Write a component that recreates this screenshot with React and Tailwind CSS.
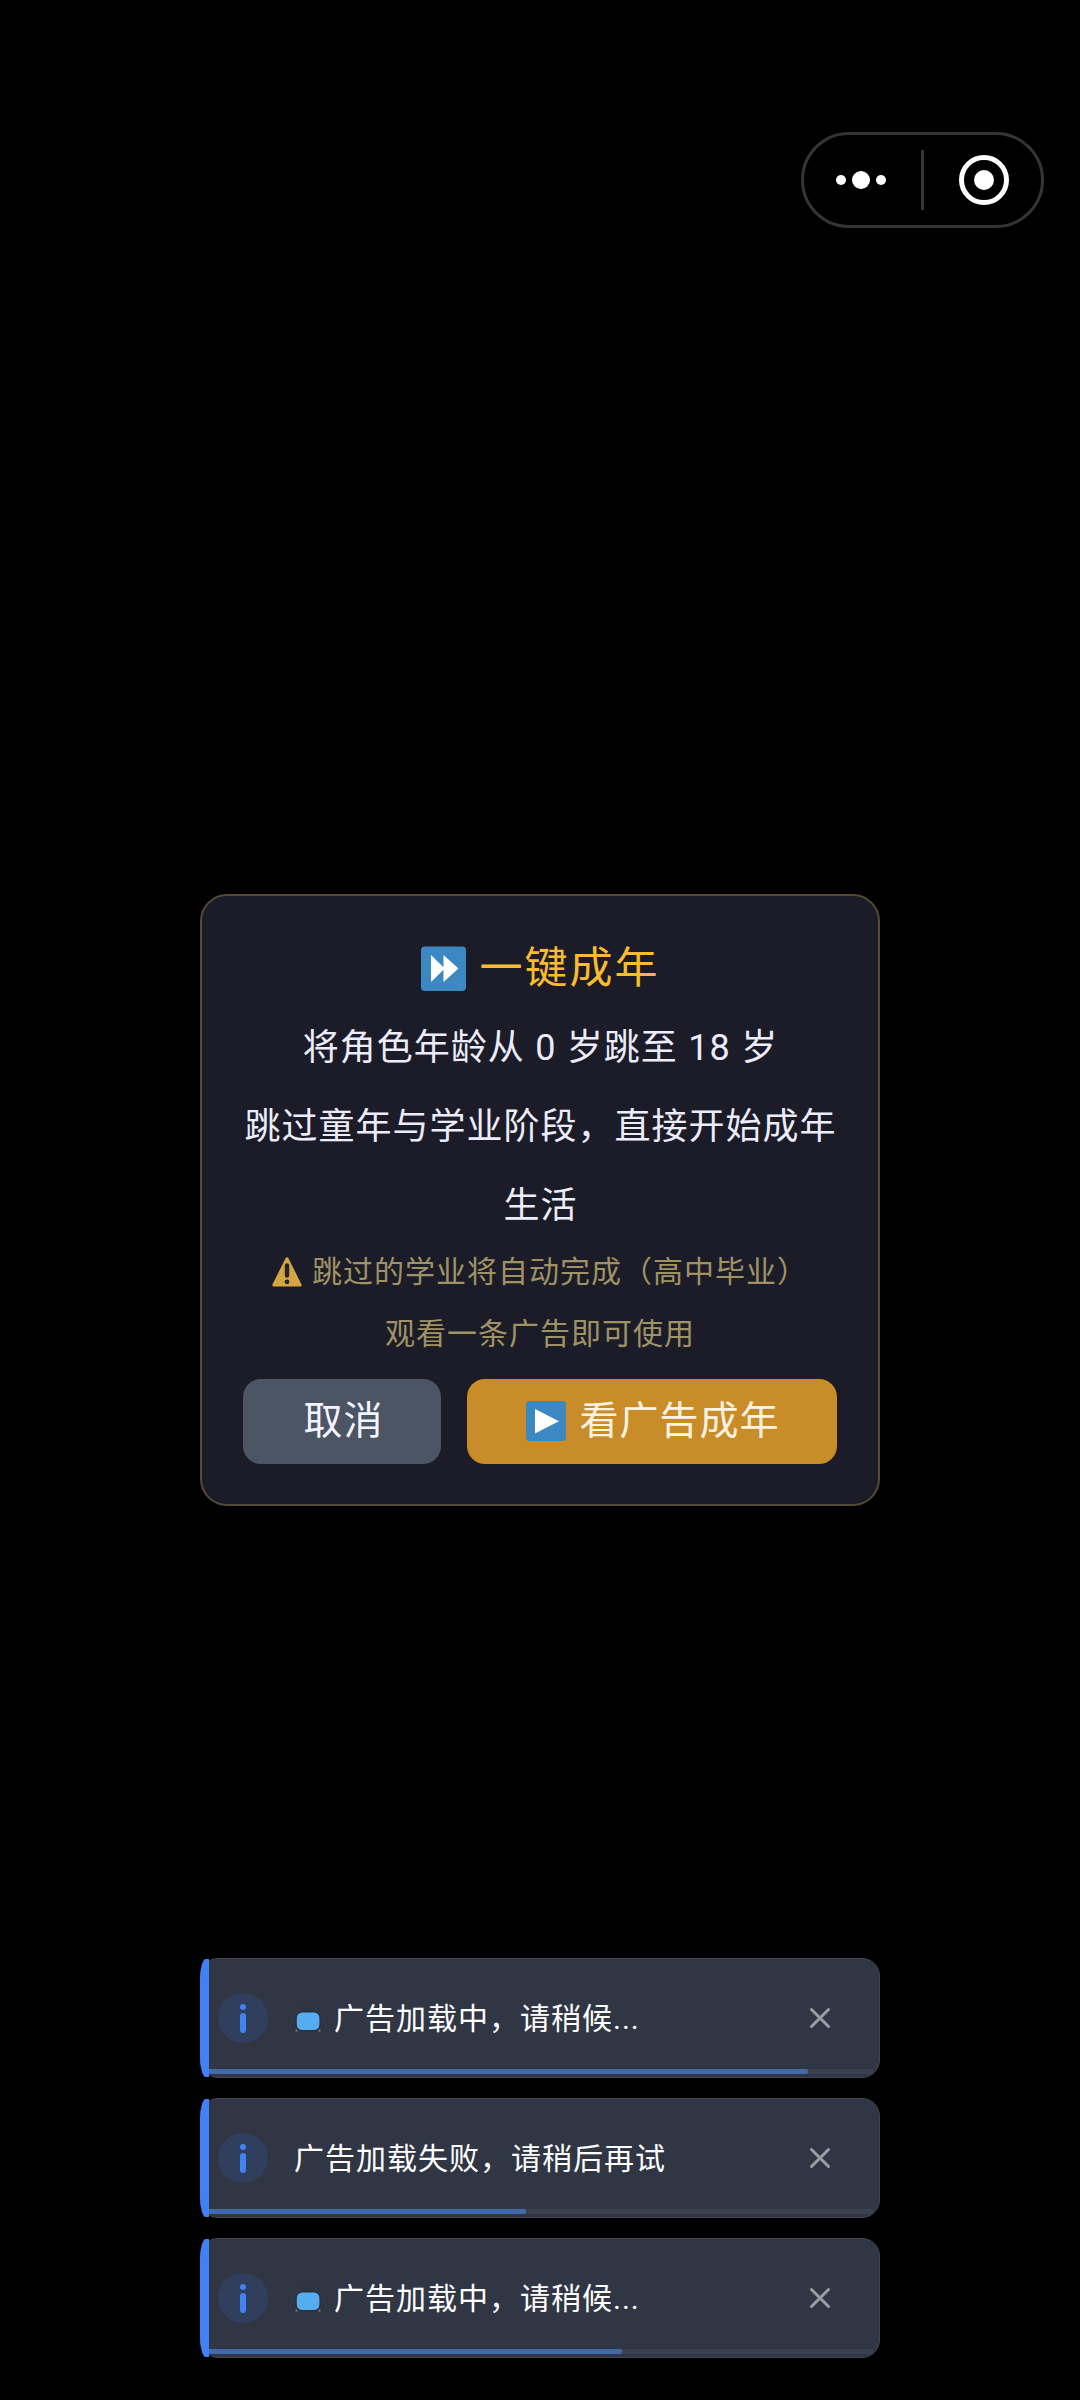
import React from 'react';

const toasts = [
  { id: 1, text: '广告加载中，请稍候...', tv: true, progress: 599 },
  { id: 2, text: '广告加载失败，请稍后再试', tv: false, progress: 317 },
  { id: 3, text: '广告加载中，请稍候...', tv: true, progress: 413 },
];

const FastForwardIcon = () => (
  <svg className="w-[45px] h-[45px] shrink-0" viewBox="0 0 45 45">
    <rect y=".5" width="45" height="44.5" rx="4" fill="#3b88c3" />
    <path d="M10 9v27l12.5-12.2V36L37.500 22.500 22.500 9v12.200z" fill="#fff" />
  </svg>
);

const PlayIcon = () => (
  <svg className="w-10 h-10 shrink-0" viewBox="0 0 40 40">
    <rect width="40" height="40" rx="3.500" fill="#3b88c3" />
    <path d="M9 8v24.500l24-12.250z" fill="#fff" />
  </svg>
);

const WarningIcon = () => (
  <svg className="w-[30px] h-[30px] shrink-0" viewBox="0 0 30 30">
    <path d="M13.600 1.200Q15-.8 16.400 1.200L29.400 27.200Q30.200 29.500 28 29.500H2Q-.2 29.500.6 27.200z" fill="#d3a543" />
    <path d="M15 8.500v10" stroke="#25222a" strokeWidth="4.400" strokeLinecap="round" />
    <circle cx="15" cy="24.800" r="2.400" fill="#25222a" />
  </svg>
);

const TvIcon = () => (
  <svg className="w-[28px] h-[30px] shrink-0" viewBox="0 0 28 30">
    <path d="M8 2l6 6 6-6" stroke="#2b303a" strokeWidth="1.200" fill="none" />
    <circle cx="2.500" cy="27.500" r="1.300" fill="#6b7079" />
    <circle cx="25.500" cy="27.500" r="1.300" fill="#6b7079" />
    <rect x="1.500" y="8" width="25" height="20.500" rx="6.500" fill="#2c303b" />
    <rect x="2.800" y="9.500" width="22.600" height="17.600" rx="5.500" fill="#55acee" />
  </svg>
);

const Capsule = () => (
  <div className="w-[243px] h-24 flex items-center rounded-full border-3 border-[#353535]">
    <div className="flex-1 flex items-center justify-center gap-1.5 pr-[3px]">
      <span className="w-2.5 h-2.5 rounded-full bg-white" />
      <span className="w-[18px] h-[18px] rounded-full bg-white" />
      <span className="w-2.5 h-2.5 rounded-full bg-white" />
    </div>
    <div className="w-[3px] h-[60px] bg-[#353535]" />
    <div className="flex-1 flex items-center justify-center pl-[3px]">
      <div className="w-[50px] h-[50px] rounded-full border-5 border-white flex items-center justify-center">
        <span className="w-5 h-5 rounded-full bg-white" />
      </div>
    </div>
  </div>
);

const Dialog = () => (
  <div className="w-[680px] h-[612px] rounded-[27px] border-2 border-[#544a35] bg-[#1b1c28] px-[41px] pt-10">
    <h2 className="h-16 flex items-center justify-center gap-3.5 text-[43px] tracking-[2px] text-[#f9bc2e]">
      <FastForwardIcon />
      <span>一键成年</span>
    </h2>
    <div className="mt-[9px] pl-px text-center text-[36px] leading-[79px] tracking-[1px] text-[#ececfa]">
      <p className="[word-spacing:0.5px]">将角色年龄从 0 岁跳至 18 岁</p>
      <p>跳过童年与学业阶段，直接开始成年生活</p>
    </div>
    <div className="-mt-0.5 flex flex-col gap-1.5 text-center text-[30px] leading-[56px] tracking-[1px] text-[#9f9265]">
      <p className="flex items-center justify-center gap-2.5">
        <WarningIcon />
        <span>跳过的学业将自动完成（高中毕业）</span>
      </p>
      <p>观看一条广告即可使用</p>
    </div>
    <div className="mt-[17px] flex gap-[26px] text-[39px] tracking-[1px]">
      <button className="w-[198px] h-[85px] rounded-[18px] bg-[#4c5564] text-[#f3f4ff] pl-[3px] pb-px">取消</button>
      <button className="flex-1 h-[85px] rounded-[18px] bg-[#c88d28] text-[#fff2e2] flex items-center justify-center gap-[13px] pl-0.5 pb-px">
        <PlayIcon />
        <span>看广告成年</span>
      </button>
    </div>
  </div>
);

const Toast = ({ text, tv, progress }) => (
  <div className="relative w-[680px] h-[120px] flex items-center rounded-[18px] border border-[#42444e] bg-[#313644] pl-[17px]">
    <span className="absolute -left-px top-0 w-[9px] h-[118px] bg-[#4081f5] rounded-[6px_0_0_6px/20px_0_0_20px]" />
    <div className="w-[50px] h-[50px] rounded-full bg-[#2f3f5d] flex flex-col items-center justify-center gap-[3px]">
      <span className="w-1.5 h-1.5 rounded-full bg-[#4283f4]" />
      <span className="w-1.5 h-5 rounded-full bg-[#4283f4]" />
    </div>
    <div className="ml-[26px] flex-1 flex items-center gap-3 text-[30px] tracking-[1px] text-white">
      {tv && <TvIcon />}
      <span>{text}</span>
    </div>
    <svg className="w-6 h-6 mr-[47px]" viewBox="0 0 24 24">
      <path d="M3.500 3.500l17 17M20.500 3.500l-17 17" stroke="#9c9da3" strokeWidth="3" strokeLinecap="round" />
    </svg>
    <div className="absolute left-2 right-[6px] bottom-[3px] h-[5px] bg-[#3a404f]">
      <div className="h-full bg-[#4269aa] rounded-r-xs" style={{ width: progress }} />
    </div>
  </div>
);

const App = () => {
  return (
    <div
      lang="zh-CN"
      className="w-[1080px] h-[2400px] bg-black flex flex-col items-center overflow-hidden font-[Roboto,'Noto_Sans_CJK_SC',sans-serif]"
    >
      <header className="w-full flex justify-end pt-[132px] pr-9">
        <Capsule />
      </header>
      <main className="mt-[666px]">
        <Dialog />
      </main>
      <section className="mt-[452px] flex flex-col gap-5">
        {toasts.map((t) => (
          <Toast key={t.id} text={t.text} tv={t.tv} progress={t.progress} />
        ))}
      </section>
    </div>
  );
};

export default App;
